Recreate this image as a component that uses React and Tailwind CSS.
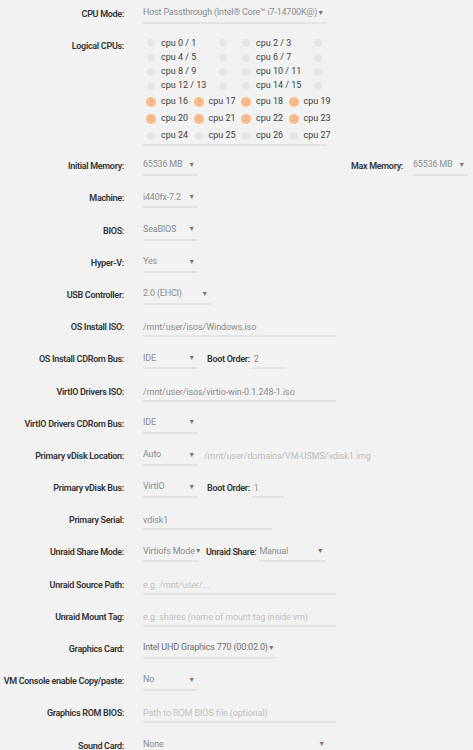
import React from "react";

const LINE = "border-b-2 border-[#e4e4e4]";

function Label({ children }) {
  return (
    <div className="w-[124px] shrink-0 text-right leading-[20px] font-semibold tracking-[-0.3px] text-[#333] whitespace-nowrap">
      {children}
    </div>
  );
}

function Select({ value, w, color = "text-[#8c8c8c]" }) {
  return (
    <div className={`flex items-center h-[20px] ${LINE} ${w} ${color} shrink-0 tracking-[-0.2px]`}>
      <span className="flex-1 whitespace-nowrap">{value}</span>
      <span className="text-[7px] text-[#777] pr-[3px]">▼</span>
    </div>
  );
}

function Input({ value, w, placeholder }) {
  return (
    <div
      className={`h-[20px] leading-[20px] ${LINE} ${w} shrink-0 whitespace-nowrap tracking-[-0.1px] ${
        placeholder ? "text-[#c2c2c2]" : "text-[#8c8c8c]"
      }`}
    >
      {value || placeholder}
    </div>
  );
}

function Row({ label, children }) {
  return (
    <div className="flex items-start h-[32.2px]">
      <Label>{label}</Label>
      <div className="flex items-start ml-[19px] flex-1 min-w-0">{children}</div>
    </div>
  );
}

function Dot({ on }) {
  return (
    <span className="w-[10px] h-[10px] flex items-center justify-center shrink-0">
      <span
        className={
          on
            ? "w-[10px] h-[10px] rounded-full bg-[#fbb98a]"
            : "w-[8px] h-[8px] rounded-full bg-[#e6e6e6]"
        }
      />
    </span>
  );
}

function Pair({ label }) {
  return (
    <div className="flex items-center w-[95px] shrink-0">
      <span className="ml-[3px]">
        <Dot />
      </span>
      <span className="ml-[5px] w-[57px] whitespace-nowrap">{label}</span>
      <Dot />
    </div>
  );
}

function Single({ label, on }) {
  return (
    <div className="flex items-center w-[47.5px] shrink-0">
      <span className="ml-[3px]">
        <Dot on={on} />
      </span>
      <span className="ml-[5px] whitespace-nowrap">{label}</span>
    </div>
  );
}

function InlineLabel({ children, ml = "ml-[9px]" }) {
  return (
    <span className={`${ml} leading-[20px] font-semibold tracking-[-0.3px] text-[#333] whitespace-nowrap`}>
      {children}
    </span>
  );
}

function BootOrder({ value }) {
  return (
    <>
      <InlineLabel>Boot Order:</InlineLabel>
      <div className={`ml-[2px] w-[32px] h-[20px] leading-[20px] ${LINE} text-[#8c8c8c] pl-[2px]`}>
        {value}
      </div>
    </>
  );
}

export default function App() {
  const pairs = [
    ["cpu 0 / 1", "cpu 2 / 3"],
    ["cpu 4 / 5", "cpu 6 / 7"],
    ["cpu 8 / 9", "cpu 10 / 11"],
    ["cpu 12 / 13", "cpu 14 / 15"],
  ];
  const singles = [
    [16, 17, 18, 19, true],
    [20, 21, 22, 23, true],
    [24, 25, 26, 27, false],
  ];

  return (
    <div
      className="min-h-[750px] bg-[#f2f2f2] pt-[4px] text-[9px] overflow-hidden"
      style={{ fontFamily: 'Roboto, "Liberation Sans", sans-serif' }}
    >
      <Row label="CPU Mode:">
        <Select value="Host Passthrough (Intel® Core™ i7-14700K@)" w="w-[184px]" />
      </Row>

      {/* Logical CPUs */}
      <div className="flex items-start h-[120px]">
        <Label>Logical CPUs:</Label>
        <div className={`ml-[19px] w-[184px] ${LINE} text-[#3c3c3c]`}>
          {pairs.map((p, i) => (
            <div key={i} className="flex h-[14.3px] items-center">
              <Pair label={p[0]} />
              <Pair label={p[1]} />
            </div>
          ))}
          {singles.map((r, i) => (
            <div key={i} className="flex h-[17px] items-center">
              {r.slice(0, 4).map((n) => (
                <Single key={n} label={`cpu ${n}`} on={r[4]} />
              ))}
            </div>
          ))}
        </div>
      </div>

      <Row label="Initial Memory:">
        <Select value="65536 MB" w="w-[55px]" />
        <div className="flex-1" />
        <InlineLabel ml="ml-0">Max Memory:</InlineLabel>
        <div className="ml-[10px] mr-[5px]">
          <Select value="65536 MB" w="w-[55px]" />
        </div>
      </Row>
      <Row label="Machine:">
        <Select value="i440fx-7.2" w="w-[55px]" />
      </Row>
      <Row label="BIOS:">
        <Select value="SeaBIOS" w="w-[55px]" />
      </Row>
      <Row label="Hyper-V:">
        <Select value="Yes" w="w-[55px]" />
      </Row>
      <Row label="USB Controller:">
        <Select value="2.0 (EHCI)" w="w-[68px]" />
      </Row>
      <Row label="OS Install ISO:">
        <Input value="/mnt/user/isos/Windows.iso" w="w-[193px]" />
      </Row>
      <Row label="OS Install CDRom Bus:">
        <Select value="IDE" w="w-[55px]" />
        <BootOrder value="2" />
      </Row>
      <Row label="VirtIO Drivers ISO:">
        <Input value="/mnt/user/isos/virtio-win-0.1.248-1.iso" w="w-[193px]" />
      </Row>
      <Row label="VirtIO Drivers CDRom Bus:">
        <Select value="IDE" w="w-[55px]" />
      </Row>
      <Row label="Primary vDisk Location:">
        <Select value="Auto" w="w-[55px]" />
        <span className="ml-[6px] leading-[20px] text-[#bdbdbd] tracking-[-0.1px] whitespace-nowrap">
          /mnt/user/domains/VM-USMS/vdisk1.img
        </span>
      </Row>
      <Row label="Primary vDisk Bus:">
        <Select value="VirtIO" w="w-[55px]" />
        <BootOrder value="1" />
      </Row>
      <Row label="Primary Serial:">
        <Input value="vdisk1" w="w-[129px]" />
      </Row>
      <Row label="Unraid Share Mode:">
        <Select value="Virtiofs Mode" w="w-[56px]" />
        <InlineLabel ml="ml-[7px]">Unraid Share:</InlineLabel>
        <div className="ml-[3px]">
          <Select value="Manual" w="w-[67px]" />
        </div>
      </Row>
      <Row label="Unraid Source Path:">
        <Input placeholder="e.g. /mnt/user/..." w="w-[193px]" />
      </Row>
      <Row label="Unraid Mount Tag:">
        <Input placeholder="e.g. shares (name of mount tag inside vm)" w="w-[193px]" />
      </Row>
      <Row label="Graphics Card:">
        <Select value="Intel UHD Graphics 770 (00:02.0)" w="w-[133px]" color="text-[#6f6f6f]" />
      </Row>
      <Row label="VM Console enable Copy/paste:">
        <Select value="No" w="w-[55px]" />
      </Row>
      <Row label="Graphics ROM BIOS:">
        <Input placeholder="Path to ROM BIOS file (optional)" w="w-[193px]" />
      </Row>
      <Row label="Sound Card:">
        <Select value="None" w="w-[185px]" />
      </Row>
    </div>
  );
}
